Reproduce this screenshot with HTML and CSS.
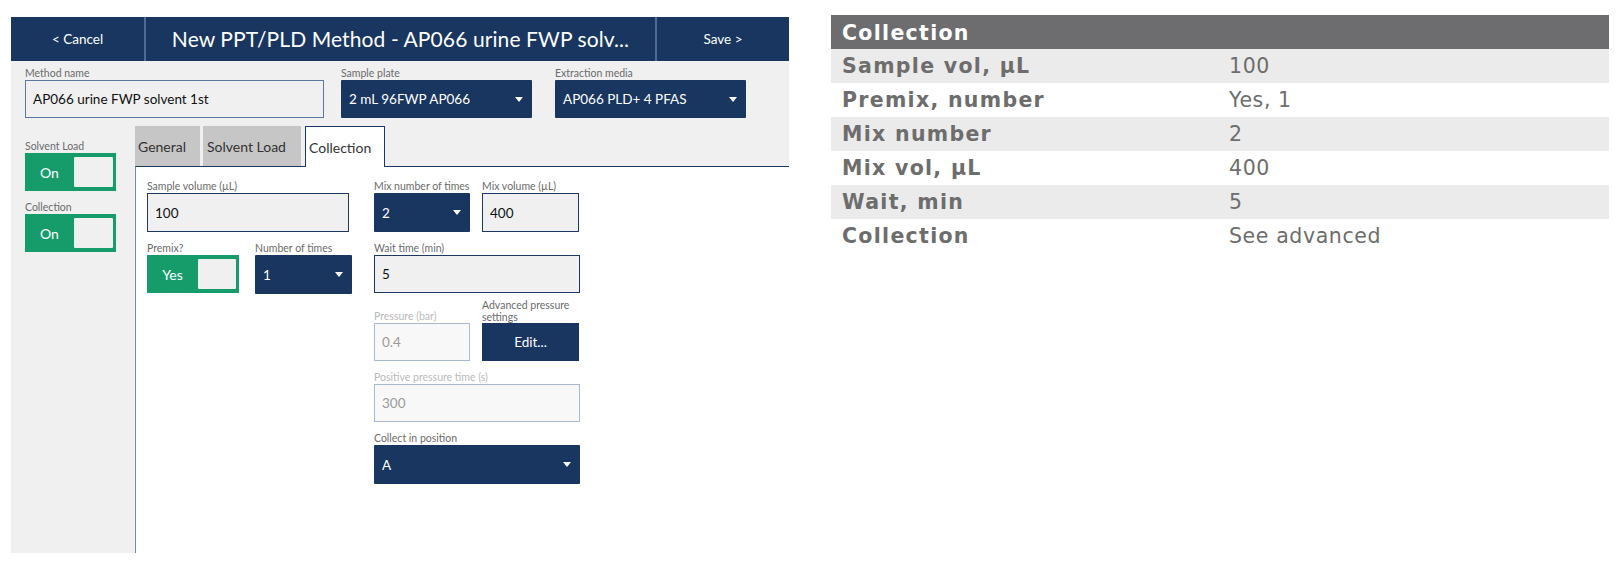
FILE: index.html
```html
<!DOCTYPE html>
<html>
<head>
<meta charset="utf-8">
<link rel="stylesheet" href="styles.css">
</head>
<body>
<div class="app">
  <div class="header">
    <div class="hbtn cancel">&lt; Cancel</div>
    <div class="title">New PPT/PLD Method - AP066 urine FWP solv...</div>
    <div class="hbtn save">Save &gt;</div>
  </div>
  <div class="top">
    <div class="field f-name">
      <div class="lbl">Method name</div>
      <div class="input light">AP066 urine FWP solvent 1st</div>
    </div>
    <div class="field f-plate">
      <div class="lbl">Sample plate</div>
      <div class="select">2 mL 96FWP AP066<span class="caret"></span></div>
    </div>
    <div class="field f-media">
      <div class="lbl">Extraction media</div>
      <div class="select">AP066 PLD+ 4 PFAS<span class="caret"></span></div>
    </div>
  </div>
  <div class="body">
    <div class="sidebar">
      <div class="lbl">Solvent Load</div>
      <div class="toggle side"><span class="tl">On</span><span class="knob"></span></div>
      <div class="lbl sp">Collection</div>
      <div class="toggle side"><span class="tl">On</span><span class="knob"></span></div>
    </div>
    <div class="main">
      <div class="tabs">
        <div class="tab t-gen">General</div>
        <div class="tab t-sol">Solvent Load</div>
        <div class="tab t-col active">Collection</div>
      </div>
      <div class="panel">
        <div class="col left">
          <div class="field">
            <div class="lbl">Sample volume (µL)</div>
            <div class="input w202">100</div>
          </div>
          <div class="row mt">
            <div class="field">
              <div class="lbl">Premix?</div>
              <div class="toggle premix"><span class="tl">Yes</span><span class="knob"></span></div>
            </div>
            <div class="field g16">
              <div class="lbl">Number of times</div>
              <div class="select w97">1<span class="caret"></span></div>
            </div>
          </div>
        </div>
        <div class="col right">
          <div class="row">
            <div class="field">
              <div class="lbl">Mix number of times</div>
              <div class="select w96">2<span class="caret"></span></div>
            </div>
            <div class="field g12">
              <div class="lbl">Mix volume (µL)</div>
              <div class="input w97">400</div>
            </div>
          </div>
          <div class="field mt">
            <div class="lbl">Wait time (min)</div>
            <div class="input w206 h38">5</div>
          </div>
          <div class="row end">
            <div class="field">
              <div class="lbl dis">Pressure (bar)</div>
              <div class="input disabled w96 h38">0.4</div>
            </div>
            <div class="field g12">
              <div class="lbl two">Advanced pressure<br>settings</div>
              <div class="button w97 h38">Edit...</div>
            </div>
          </div>
          <div class="field mt">
            <div class="lbl dis">Positive pressure time (s)</div>
            <div class="input disabled w206 h38">300</div>
          </div>
          <div class="field mt">
            <div class="lbl">Collect in position</div>
            <div class="select w206">A<span class="caret"></span></div>
          </div>
        </div>
      </div>
    </div>
  </div>
</div>
<table class="summary">
  <tr class="head"><th colspan="2">Collection</th></tr>
  <tr class="odd"><td class="k">Sample vol, µL</td><td class="v">100</td></tr>
  <tr><td class="k">Premix, number</td><td class="v">Yes, 1</td></tr>
  <tr class="odd"><td class="k">Mix number</td><td class="v">2</td></tr>
  <tr><td class="k">Mix vol, µL</td><td class="v">400</td></tr>
  <tr class="odd"><td class="k">Wait, min</td><td class="v">5</td></tr>
  <tr><td class="k">Collection</td><td class="v">See advanced</td></tr>
</table>
</body>
</html>
```

FILE: styles.css
```css
* { box-sizing: border-box; }
html, body { margin: 0; padding: 0; background: #fff; }
body {
  display: flex;
  align-items: flex-start;
  padding: 15px 0 0 11px;
  gap: 42px;
  font-family: Lato, "Noto Sans", sans-serif;
}
.app {
  width: 778px;
  height: 536px;
  margin-top: 2px;
  background: #f0f0f0;
  display: flex;
  flex-direction: column;
}
.header {
  height: 44px;
  background: #18365f;
  display: flex;
  color: #fff;
}
.hbtn {
  display: flex;
  align-items: center;
  justify-content: center;
  font-size: 13.5px;
}
.cancel { width: 135px; border-right: 2px solid #4c6a93; }
.save { width: 134px; border-left: 2px solid #4c6a93; }
.title {
  flex: 1;
  display: flex;
  align-items: center;
  justify-content: center;
  font-size: 21px;
  letter-spacing: 0.1px;
  padding-bottom: 2px;
}
.top {
  display: flex;
  padding: 6px 0 0 14px;
}
.f-plate { margin-left: 17px; }
.f-media { margin-left: 23px; }
.lbl {
  font-size: 10.5px;
  line-height: 13px;
  color: #6b6b6b;
  white-space: nowrap;
}
.lbl.dis { color: #b9b9b9; }
.lbl.two { line-height: 12px; }
.input, .select, .button {
  height: 39px;
  display: flex;
  align-items: center;
  font-size: 13.5px;
}
.top .input, .top .select { height: 38px; }
.h38 { height: 38px; }
.input {
  background: #f0f0f0;
  border: 1px solid #1c3862;
  color: #111;
  padding-left: 7px;
}
.input.light { border-color: #5b78a0; }
.f-name .input { width: 299px; }
.input.disabled {
  background: #f8f8f8;
  border-color: #a9b9cf;
  color: #9a9a9a;
}
.select {
  background: #18365f;
  color: #fff;
  padding: 0 9px 0 8px;
  justify-content: space-between;
  border-radius: 1px;
}
.f-plate .select, .f-media .select { width: 191px; }
.caret {
  width: 0;
  height: 0;
  border-left: 4.5px solid transparent;
  border-right: 4.5px solid transparent;
  border-top: 5px solid #fff;
}
.button {
  background: #18365f;
  color: #fff;
  justify-content: center;
}
.body {
  flex: 1;
  display: flex;
  margin-top: 8px;
}
.sidebar {
  width: 124px;
  padding: 14px 0 0 14px;
}
.sidebar .lbl.sp { margin-top: 10px; }
.toggle {
  height: 38px;
  background: #169c6b;
  display: flex;
  align-items: center;
  justify-content: space-between;
  padding: 4px 3px 4px 0;
  color: #fff;
  font-size: 14px;
}
.toggle .tl { flex: 1; text-align: center; }
.knob {
  width: 39px;
  height: 30px;
  background: #f0f0f0;
  border-radius: 1px;
}
.toggle.side { width: 91px; }
.toggle.premix { width: 92px; }
.toggle.premix .knob { width: 38px; }
.main {
  flex: 1;
  display: flex;
  flex-direction: column;
}
.tabs {
  display: flex;
  height: 40px;
  align-items: stretch;
}
.tab {
  background: #c6c6c6;
  color: #333;
  font-size: 14px;
  display: flex;
  align-items: center;
  padding-left: 3px;
  margin-right: 3px;
}
.t-gen { width: 65px; }
.t-sol { width: 98px; padding-left: 4px; margin-right: 4px; }
.t-col { width: 80px; }
.tab.active {
  background: #fff;
  border: 1px solid #1c3862;
  border-bottom: none;
  margin-bottom: -1px;
  height: 41px;
  padding-left: 3px;
  position: relative;
  z-index: 1;
}
.panel {
  flex: 1;
  background: #fff;
  border-top: 1px solid #1c3862;
  border-left: 1px solid #6f8bb0;
  display: flex;
  padding: 13px 0 0 11px;
}
.col.left { width: 205px; }
.col.right { margin-left: 22px; }
.row { display: flex; }
.row.end { align-items: flex-end; margin-top: 6px; }
.mt { margin-top: 10px; }
.g16 { margin-left: 16px; }
.g12 { margin-left: 12px; }
.w202 { width: 202px; }
.w97 { width: 97px; }
.w96 { width: 96px; }
.w206 { width: 206px; }
.summary {
  width: 778px;
  border-collapse: collapse;
  font-family: "DejaVu Sans", Verdana, sans-serif;
  font-size: 20.5px;
  color: #6d6d6d;
}
.summary th, .summary td {
  height: 34px;
  padding: 0 0 0 11px;
  text-align: left;
  white-space: nowrap;
}
.summary .head th {
  background: #6d6d6f;
  color: #fff;
  font-weight: bold;
  letter-spacing: 1.3px;
  padding-top: 1px;
}
.summary .odd td { background: #ebebeb; }
.summary .k { width: 398px; font-weight: bold; letter-spacing: 1.3px; }
.summary .v { padding-left: 0; font-weight: normal; letter-spacing: 0.6px; }
```
